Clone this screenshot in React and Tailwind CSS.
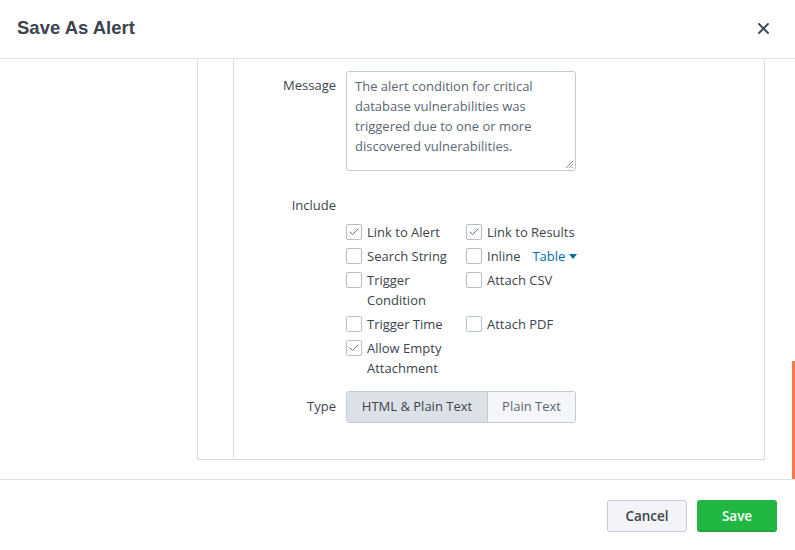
import { Check } from 'lucide-react'

const FONT = { fontFamily: '"Open Sans", "Liberation Sans", Arial, sans-serif' }
const TITLE = { fontFamily: '"Liberation Sans", Arial, sans-serif' }

function Box({ checked }) {
  return (
    <span className="mt-[2px] flex h-4 w-4 shrink-0 items-center justify-center rounded-[2px] border border-[#b7c0ca] bg-white">
      {checked && <Check size={12} strokeWidth={1.6} className="text-[#34506b]" />}
    </span>
  )
}

function Opt({ checked, label, wrap = 'w-[88px]', children }) {
  return (
    <div className="flex items-start gap-[5px]">
      <Box checked={checked} />
      <span className={`${wrap} leading-5`}>{label}</span>
      {children}
    </div>
  )
}

export default function App() {
  return (
    <div className="flex h-[550px] w-[795px] flex-col overflow-hidden bg-white text-[13px] text-[#3c444d]" style={FONT}>
      <div className="flex h-[59px] shrink-0 items-center justify-between border-b border-[#dde2e8] pl-[17px] pr-[26px]">
        <h1 className="pb-[2px] text-[18.5px] font-bold text-[#3c444d]" style={TITLE}>Save As Alert</h1>
        <svg width="11" height="11" viewBox="0 0 11 11" className="mb-[1px]">
          <path d="M1 1L10 10M10 1L1 10" stroke="#3c444d" strokeWidth="1.8" strokeLinecap="round" />
        </svg>
      </div>

      <div className="relative h-[420px] shrink-0 pb-[19px] pl-[197px] pr-[30px]">
        <div className="flex h-full border-b border-l border-r border-[#d8dde4]">
          <div className="w-[36px] shrink-0 border-r border-[#d8dde4]" />
          <div className="flex-1 pt-3">
            <div className="flex gap-[10px]">
              <div className="w-[102px] pt-[4px] text-right leading-5">Message</div>
              <div className="relative h-[100px] w-[230px] rounded-[3px] border border-[#c3cbd4] px-2 pt-[4px] leading-5 text-[#5c6773]">
                The alert condition for critical
                <br />
                database vulnerabilities was
                <br />
                triggered due to one or more
                <br />
                discovered vulnerabilities.
                <svg width="9" height="9" viewBox="0 0 9 9" className="absolute bottom-[1px] right-[1px]">
                  <path d="M8 1L1 8M8 4L4 8M8 7L7 8" stroke="#8a939c" strokeWidth="1" />
                </svg>
              </div>
            </div>

            <div className="mt-[24px] flex gap-[10px]">
              <div className="w-[102px] text-right leading-5">Include</div>
            </div>
            <div className="mt-[7px] ml-[112px] grid w-[240px] grid-cols-[120px_120px] gap-y-1">
              <Opt checked label="Link to Alert" />
              <Opt checked label="Link to Results" wrap="w-[99px] whitespace-nowrap" />
              <Opt label="Search String" />
              <Opt label="Inline" wrap="">
                <span className="ml-[7px] flex items-center gap-1 leading-5 text-[#006eaa]">
                  Table
                  <svg width="8" height="5" viewBox="0 0 8 5">
                    <path d="M0 0H8L4 5Z" fill="#006eaa" />
                  </svg>
                </span>
              </Opt>
              <Opt label="Trigger Condition" />
              <Opt label="Attach CSV" />
              <Opt label="Trigger Time" />
              <Opt label="Attach PDF" />
              <Opt checked label="Allow Empty Attachment" />
            </div>

            <div className="mt-[13px] flex gap-[10px]">
              <div className="w-[102px] pt-[5px] text-right leading-5">Type</div>
              <div className="flex h-8 overflow-hidden rounded-[3px] border border-[#c3cbd4]">
                <div className="flex w-[141px] items-center justify-center border-r border-[#c3cbd4] bg-[#dce1e8] text-[#3c444d]">
                  HTML &amp; Plain Text
                </div>
                <div className="flex w-[87px] items-center justify-center bg-[#f4f6f9] text-[#5c6773]">
                  Plain Text
                </div>
              </div>
            </div>
          </div>
        </div>
        <div className="absolute bottom-0 right-0 h-[118px] w-[3px] bg-[#f47a4a]" />
      </div>

      <div className="flex flex-1 items-start justify-end gap-[10px] border-t border-[#dde2e8] pr-[18px] pt-5">
        <button className="h-8 w-20 rounded-[3px] border border-[#c3cbd4] bg-[#f2f4f7] text-[13.5px] font-semibold text-[#3c444d]">
          Cancel
        </button>
        <button className="h-8 w-20 rounded-[3px] bg-[#21b742] text-[13.5px] font-semibold text-white shadow-[inset_0_-2px_0_rgba(0,0,0,0.08)]">
          Save
        </button>
      </div>
    </div>
  )
}
